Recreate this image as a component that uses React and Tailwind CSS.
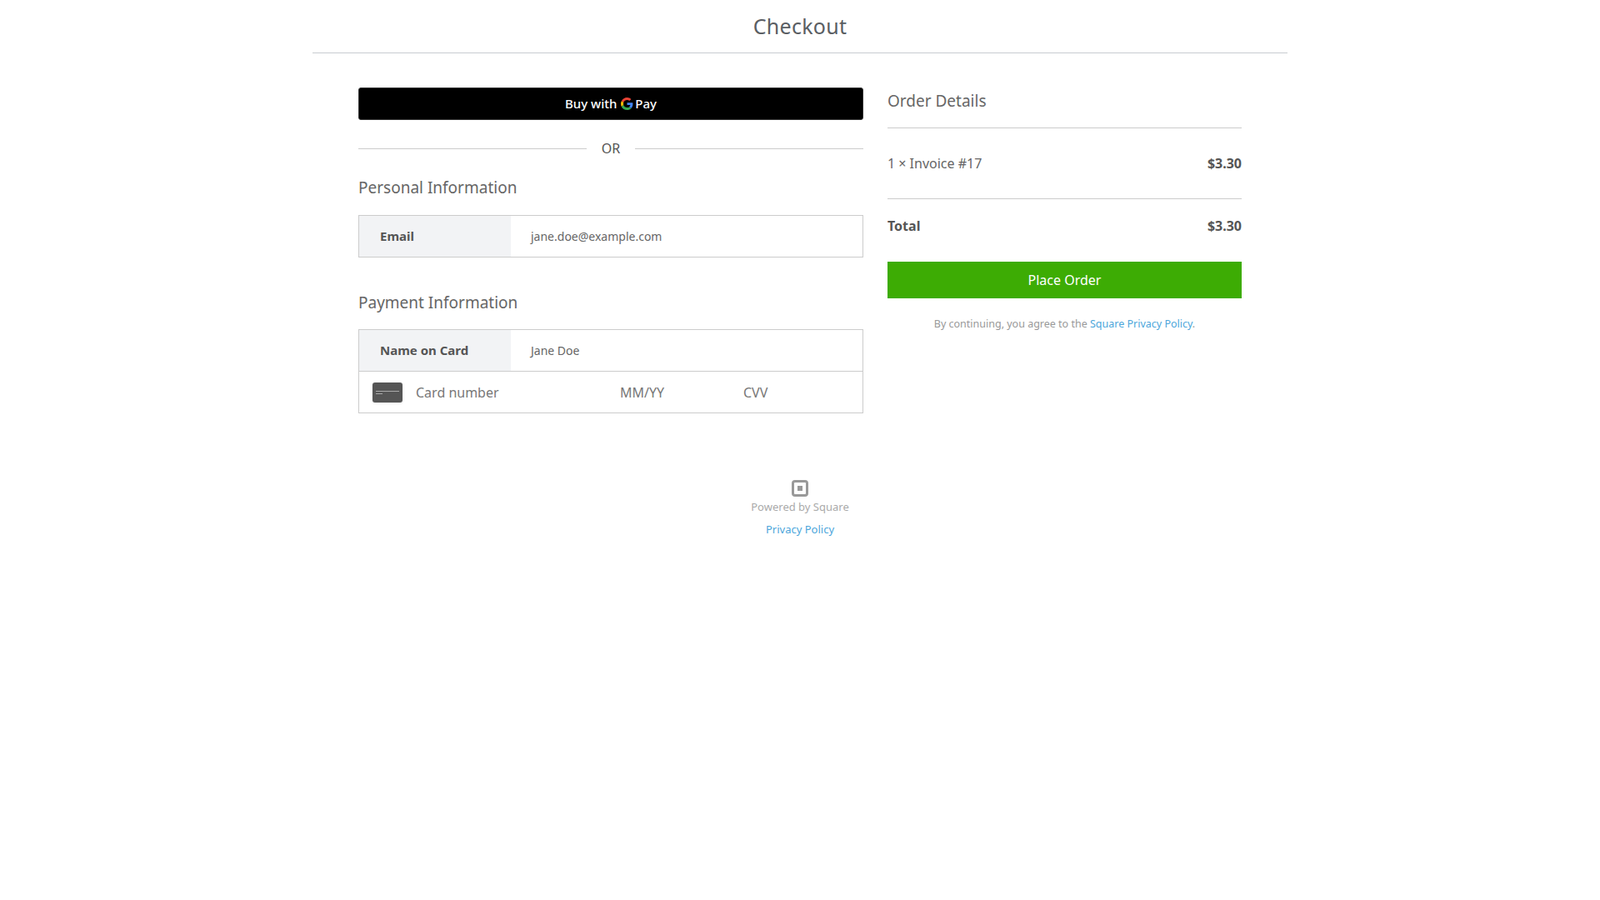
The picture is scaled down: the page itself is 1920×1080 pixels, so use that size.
export default function App() {
  return (
    <div className="min-h-screen bg-white text-[#555] font-['Lato','Open_Sans',sans-serif]">
      <div className="w-[1170px] mx-auto border-b border-[#c8ccd0] h-[64px] flex items-center justify-center">
        <h1 className="text-[25px] text-[#5a5e63] tracking-[0.3px]">Checkout</h1>
      </div>
      <div className="w-[1060px] mx-auto flex gap-[29px] pt-[41px]">
        <div className="w-[606px]">
          <button className="w-full h-[39px] bg-black rounded-[3px] border border-[#333] text-white text-[15px] font-['Roboto',sans-serif] font-medium flex items-center justify-center gap-[5px]">
            <span>Buy with</span>
            <span className="flex items-center gap-[2px]">
              <svg width="15" height="15" viewBox="0 0 48 48">
                <path fill="#EA4335" d="M24 9.5c3.5 0 6.6 1.2 9.1 3.6l6.8-6.8C35.8 2.4 30.3 0 24 0 14.6 0 6.6 5.4 2.6 13.2l7.9 6.2C12.4 13.6 17.7 9.5 24 9.5z"/>
                <path fill="#4285F4" d="M46.1 24.5c0-1.6-.1-3.1-.4-4.5H24v9h12.4c-.5 2.9-2.2 5.3-4.6 7l7.5 5.8c4.3-4 6.8-10 6.8-17.3z"/>
                <path fill="#FBBC05" d="M10.5 28.6c-.5-1.4-.8-3-.8-4.6s.3-3.2.8-4.6l-7.9-6.2C.9 16.6 0 20.2 0 24s.9 7.4 2.6 10.8l7.9-6.2z"/>
                <path fill="#34A853" d="M24 48c6.5 0 11.9-2.1 15.9-5.8l-7.5-5.8c-2.1 1.4-4.8 2.3-8.4 2.3-6.3 0-11.6-4.1-13.5-9.9l-7.9 6.2C6.6 42.6 14.6 48 24 48z"/>
              </svg>
              <span>Pay</span>
            </span>
          </button>
          <div className="flex items-center gap-[18px] mt-[22px]">
            <div className="flex-1 h-px bg-[#ccc]" />
            <span className="text-[16px] text-[#555] font-['Open_Sans',sans-serif]">OR</span>
            <div className="flex-1 h-px bg-[#ccc]" />
          </div>
          <h2 className="text-[19px] text-[#666] mt-[21px]">Personal Information</h2>
          <div className="mt-[18px] border border-[#ccc] flex h-[51px]">
            <div className="w-[182px] bg-[#f2f3f5] flex items-center pl-[25px] font-bold text-[15px] text-[#555]">Email</div>
            <div className="flex-1 flex items-center pl-[24px] text-[14px] text-[#666] font-['Roboto',sans-serif]">jane.doe@example.com</div>
          </div>
          <h2 className="text-[19px] text-[#666] mt-[40px]">Payment Information</h2>
          <div className="mt-[18px] border border-[#ccc]">
            <div className="flex h-[50px] border-b border-[#ccc]">
              <div className="w-[182px] bg-[#f2f3f5] flex items-center pl-[25px] font-bold text-[15px] text-[#555]">Name on Card</div>
              <div className="flex-1 flex items-center pl-[24px] text-[14px] text-[#666] font-['Roboto',sans-serif]">Jane Doe</div>
            </div>
            <div className="flex items-center h-[49px] font-['Roboto',sans-serif] text-[16px] text-[#777]">
              <div className="ml-[16px] w-[36px] h-[24px] rounded-[3px] bg-[#555] flex flex-col justify-center px-[4px] gap-[2px] shadow">
                <div className="h-[1px] bg-[#aaa] w-full" />
                <div className="h-[1px] bg-[#aaa] w-[8px]" />
              </div>
              <span className="ml-[16px] w-[245px]">Card number</span>
              <span className="w-[148px]">MM/YY</span>
              <span>CVV</span>
            </div>
          </div>
        </div>
        <div className="w-[425px]">
          <h2 className="text-[19px] text-[#666] pt-[2px] leading-[28px]">Order Details</h2>
          <div className="h-px bg-[#ccc] mt-[18px]" />
          <div className="flex justify-between items-center h-[84px] text-[16px]">
            <span className="text-[#666]">1 × Invoice #17</span>
            <span className="font-bold text-[#555]">$3.30</span>
          </div>
          <div className="h-px bg-[#ccc]" />
          <div className="flex justify-between items-center h-[64px] text-[16px] font-bold text-[#555]">
            <span>Total</span>
            <span>$3.30</span>
          </div>
          <button className="w-full h-[44px] bg-[#3dac04] text-white text-[16px] mt-[11px]">Place Order</button>
          <p className="text-center text-[12.5px] text-[#999] mt-[22px]">
            By continuing, you agree to the <span className="text-[#4ca6db]">Square Privacy Policy</span>.
          </p>
        </div>
      </div>
      <div className="flex flex-col items-center mt-[80px]">
        <svg width="20" height="20" viewBox="0 0 20 20">
          <rect x="1.5" y="1.5" width="17" height="17" rx="2.5" fill="none" stroke="#999" strokeWidth="3" />
          <rect x="7" y="7" width="6" height="6" fill="#999" />
        </svg>
        <span className="text-[13px] text-[#aaa] mt-[3px]">Powered by Square</span>
        <span className="text-[13px] text-[#4ca6db] mt-[7px]">Privacy Policy</span>
      </div>
    </div>
  );
}
